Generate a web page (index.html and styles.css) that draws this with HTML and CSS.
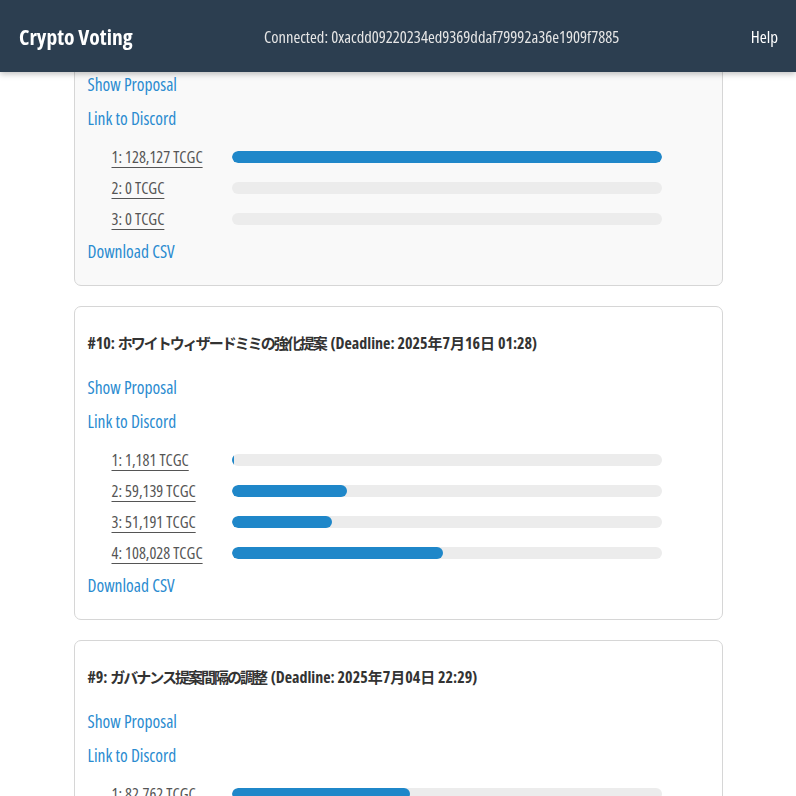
FILE: index.html
```html
<!DOCTYPE html>
<html lang="en">
<head>
    <meta charset="UTF-8">
    <meta name="viewport" content="width=device-width, initial-scale=1.0">
    <title>Crypto Voting</title>
    <link rel="stylesheet" href="styles.css">
</head>
<body>
    <header class="topbar">
        <div class="brand">Crypto Voting</div>
        <div class="account">Connected: 0xacdd09220234ed9369ddaf79992a36e1909f7885</div>
        <a class="help" href="#">Help</a>
    </header>

    <main class="proposals">
        <section class="card card-active">
            <h3 class="card-title">#11: <span class="ja">コミュニティ報酬の分配</span> (Deadline: 2025<span class="ja">年</span>7<span class="ja">月</span>30<span class="ja">日</span> 20:00)</h3>
            <a class="link" href="#">Show Proposal</a>
            <a class="link" href="#">Link to Discord</a>
            <div class="votes">
                <div class="vote">
                    <a class="vote-label" href="#">1: 128,127 TCGC</a>
                    <div class="bar"><div class="fill" style="width: 100%"></div></div>
                </div>
                <div class="vote">
                    <a class="vote-label" href="#">2: 0 TCGC</a>
                    <div class="bar"><div class="fill" style="width: 0%"></div></div>
                </div>
                <div class="vote">
                    <a class="vote-label" href="#">3: 0 TCGC</a>
                    <div class="bar"><div class="fill" style="width: 0%"></div></div>
                </div>
            </div>
            <a class="link" href="#">Download CSV</a>
        </section>

        <section class="card">
            <h3 class="card-title">#10: <span class="ja">ホワイトウィザードミミの強化提案</span> (Deadline: 2025<span class="ja">年</span>7<span class="ja">月</span>16<span class="ja">日</span> 01:28)</h3>
            <a class="link" href="#">Show Proposal</a>
            <a class="link" href="#">Link to Discord</a>
            <div class="votes">
                <div class="vote">
                    <a class="vote-label" href="#">1: 1,181 TCGC</a>
                    <div class="bar"><div class="fill" style="width: 0.54%"></div></div>
                </div>
                <div class="vote">
                    <a class="vote-label" href="#">2: 59,139 TCGC</a>
                    <div class="bar"><div class="fill" style="width: 26.94%"></div></div>
                </div>
                <div class="vote">
                    <a class="vote-label" href="#">3: 51,191 TCGC</a>
                    <div class="bar"><div class="fill" style="width: 23.32%"></div></div>
                </div>
                <div class="vote">
                    <a class="vote-label" href="#">4: 108,028 TCGC</a>
                    <div class="bar"><div class="fill" style="width: 49.21%"></div></div>
                </div>
            </div>
            <a class="link" href="#">Download CSV</a>
        </section>

        <section class="card">
            <h3 class="card-title">#9: <span class="ja">ガバナンス提案間隔の調整</span> (Deadline: 2025<span class="ja">年</span>7<span class="ja">月</span>04<span class="ja">日</span> 22:29)</h3>
            <a class="link" href="#">Show Proposal</a>
            <a class="link" href="#">Link to Discord</a>
            <div class="votes">
                <div class="vote">
                    <a class="vote-label" href="#">1: 82,762 TCGC</a>
                    <div class="bar"><div class="fill" style="width: 41.6%"></div></div>
                </div>
            </div>
            <a class="link" href="#">Download CSV</a>
        </section>
    </main>
</body>
</html>
```
FILE: styles.css
```css
* {
    box-sizing: border-box;
}
body {
    margin: 0;
    background-color: white;
    font-family: "Open Sans", "Noto Sans CJK JP", sans-serif;
    font-stretch: 75%;
    color: #333;
}
.topbar {
    position: fixed;
    top: 0;
    left: 0;
    right: 0;
    height: 72px;
    padding: 0 18px 0 19px;
    display: flex;
    align-items: center;
    justify-content: space-between;
    background-color: #2c3e50;
    box-shadow: 0 2px 6px rgba(0, 0, 0, 0.25);
    color: white;
    z-index: 10;
}
.brand {
    font-size: 21.5px;
    font-weight: 700;
}
.account {
    font-size: 16.5px;
    color: #e6e6e6;
}
.help {
    font-size: 17px;
    color: white;
    text-decoration: none;
}
.proposals {
    width: 649px;
    margin: 3px auto 0;
}
.card {
    border: 1px solid #d6d6d6;
    border-radius: 7px;
    padding: 19px 13px 17px;
    margin-bottom: 20px;
    background-color: white;
}
.card-active {
    background-color: #f9f9f9;
}
.card-title {
    margin: 0 0 10px;
    font-size: 16px;
    line-height: 34px;
    font-weight: 700;
    color: #333;
}
.ja {
    font-size: 15px;
    letter-spacing: -2px;
    margin-right: 2px;
}
.link {
    display: block;
    width: max-content;
    font-size: 17.5px;
    line-height: 34px;
    color: #2a8bd0;
    text-decoration: none;
}
.votes {
    margin-top: 6px;
    padding-left: 24px;
}
.vote {
    display: grid;
    grid-template-columns: 120px 430px;
    align-items: center;
    height: 31px;
}
.vote-label {
    font-size: 16.3px;
    color: #555;
    text-decoration: underline;
    text-underline-offset: 4px;
    width: max-content;
}
.bar {
    height: 12px;
    border-radius: 6px;
    background-color: #ececec;
    overflow: hidden;
}
.fill {
    height: 100%;
    border-radius: 6px;
    background-color: #1f87c9;
}
```
